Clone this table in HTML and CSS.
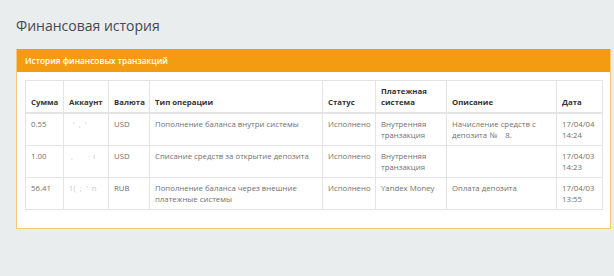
FILE: index.html
```html
<!DOCTYPE html>
<html lang="ru">
<head>
<meta charset="utf-8">
<title>Финансовая история</title>
<link rel="stylesheet" href="styles.css">
</head>
<body>
<div class="page">
  <h1 class="page-title">Финансовая история</h1>
  <div class="panel">
    <div class="panel-heading">История финансовых транзакций</div>
    <div class="panel-body">
      <table class="tx-table">
        <thead>
          <tr>
            <th class="c-sum">Сумма</th>
            <th class="c-acc">Аккаунт</th>
            <th class="c-cur">Валюта</th>
            <th class="c-type">Тип операции</th>
            <th class="c-status">Статус</th>
            <th class="c-sys">Платежная система</th>
            <th class="c-desc">Описание</th>
            <th class="c-date">Дата</th>
          </tr>
        </thead>
        <tbody>
          <tr>
            <td>0.55</td>
            <td><span class="blur">&nbsp;&nbsp;'&nbsp; ,&nbsp; '</span></td>
            <td>USD</td>
            <td>Пополнение баланса внутри системы</td>
            <td>Исполнено</td>
            <td>Внутренняя транзакция</td>
            <td>Начисление средств с депозита №&nbsp;&nbsp;&nbsp; 8.</td>
            <td>17/04/04 14:24</td>
          </tr>
          <tr>
            <td>1.00</td>
            <td><span class="blur">&nbsp;,&nbsp;&nbsp;&nbsp;&nbsp;&nbsp;&nbsp; ·&nbsp; ı</span></td>
            <td>USD</td>
            <td>Списание средств за открытие депозита</td>
            <td>Исполнено</td>
            <td>Внутренняя транзакция</td>
            <td></td>
            <td>17/04/03 14:23</td>
          </tr>
          <tr>
            <td>56.41</td>
            <td><span class="blur">1(&nbsp; ;&nbsp; '&nbsp; n</span></td>
            <td>RUB</td>
            <td>Пополнение баланса через внешние платежные системы</td>
            <td>Исполнено</td>
            <td>Yandex Money</td>
            <td>Оплата депозита</td>
            <td>17/04/03 13:55</td>
          </tr>
        </tbody>
      </table>
    </div>
  </div>
</div>
</body>
</html>
```
FILE: styles.css
```css
* { box-sizing: border-box; }
html, body {
  margin: 0;
  padding: 0;
  background: #e9edee;
  font-family: "Open Sans", "Noto Sans", sans-serif;
}
.page {
  padding: 16px 3px 0 16px;
}
.page-title {
  margin: 0 0 14px 0;
  font-size: 14px;
  font-weight: 400;
  line-height: 19px;
  color: #444a4f;
}
.panel {
  background: #fff;
  border: 1px solid #f7c77a;
  border-top: none;
  width: 595px;
}
.panel-heading {
  background: #f39c12;
  color: #fff;
  font-size: 8.3px;
  font-weight: 600;
  height: 23px;
  line-height: 23px;
  padding: 0 9px 0 8px;
}
.panel-body {
  padding: 8px 8px 18px 8px;
}
.tx-table {
  width: 577px;
  border-collapse: collapse;
  border: 1px solid #e2e2e2;
  font-size: 7.8px;
  line-height: 11px;
  color: #707070;
  table-layout: fixed;
}
.tx-table th,
.tx-table td {
  border: 1px solid #e4e4e4;
  padding: 5px 4px 4px 5px;
  text-align: left;
  vertical-align: top;
}
.tx-table th {
  color: #333;
  font-weight: 700;
  vertical-align: bottom;
  border-bottom: 2px solid #e4e4e4;
  height: 31px;
}
.tx-table td { height: 32px; }
.c-sum { width: 38px; }
.c-acc { width: 45px; }
.c-cur { width: 41px; }
.c-type { width: 173px; }
.c-status { width: 53px; }
.c-sys { width: 71px; }
.c-desc { width: 110px; }
.c-date { width: 46px; }
.blur { color: #c8c8c8; white-space: pre; }
```
